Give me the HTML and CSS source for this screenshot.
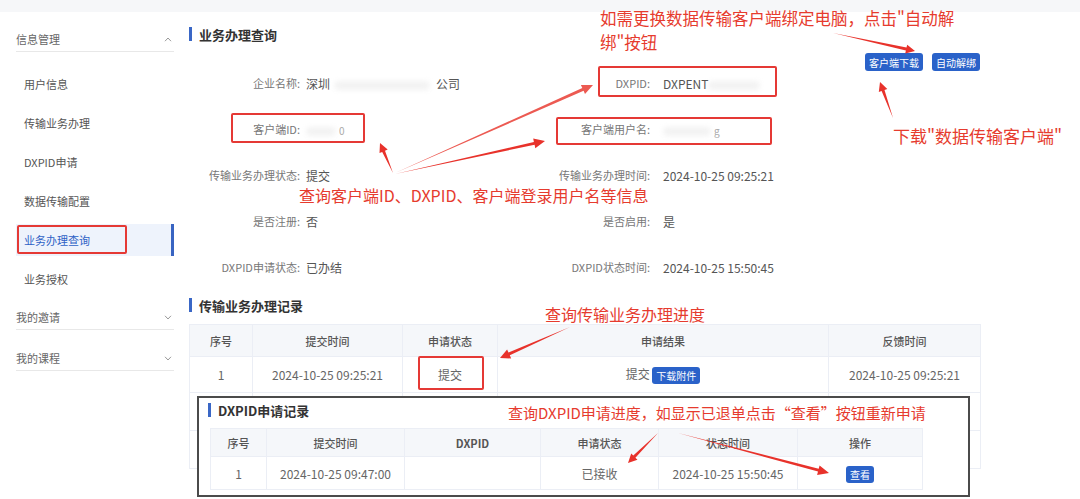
FILE: index.html
```html
<!DOCTYPE html>
<html lang="zh-CN">
<head>
  <meta charset="UTF-8" />
  <title>业务办理查询</title>
  <link rel="stylesheet" href="styles.css">
</head>
<body>
  <div class="page">
    <div class="topbar"></div>

    <div class="layout">
      <!-- Side menu -->
      <aside class="sidebar">
        <div class="menu-group open">
          <div class="menu-title">
            <span>信息管理</span>
            <svg class="chevron" viewBox="0 0 8 5"><polyline points="1,4.2 4,1 7,4.2" /></svg>
          </div>
          <ul class="menu-list">
            <li>用户信息</li>
            <li>传输业务办理</li>
            <li>DXPID申请</li>
            <li>数据传输配置</li>
            <li class="active">业务办理查询</li>
            <li>业务授权</li>
          </ul>
        </div>
        <div class="menu-group">
          <div class="menu-title">
            <span>我的邀请</span>
            <svg class="chevron" viewBox="0 0 8 5"><polyline points="1,0.8 4,4 7,0.8" /></svg>
          </div>
        </div>
        <div class="menu-group">
          <div class="menu-title">
            <span>我的课程</span>
            <svg class="chevron" viewBox="0 0 8 5"><polyline points="1,0.8 4,4 7,0.8" /></svg>
          </div>
        </div>
      </aside>

      <!-- Main content -->
      <main class="content">
        <section>
          <h3 class="section-title">业务办理查询</h3>
          <div class="info-wrap">
            <div class="info-grid">
              <div class="info-label">企业名称:</div>
              <div class="info-value">深圳<span class="mask mask-company"></span>公司</div>
              <div class="info-label">DXPID:</div>
              <div class="info-value right">DXPENT<span class="mask mask-dxpid"></span></div>

              <div class="info-label">客户端ID:</div>
              <div class="info-value"><span class="mask mask-id"></span><span class="faint">0</span></div>
              <div class="info-label">客户端用户名:</div>
              <div class="info-value right"><span class="mask mask-user"></span><span class="faint">g</span></div>

              <div class="info-label">传输业务办理状态:</div>
              <div class="info-value">提交</div>
              <div class="info-label">传输业务办理时间:</div>
              <div class="info-value right">2024-10-25 09:25:21</div>

              <div class="info-label">是否注册:</div>
              <div class="info-value">否</div>
              <div class="info-label">是否启用:</div>
              <div class="info-value right">是</div>

              <div class="info-label">DXPID申请状态:</div>
              <div class="info-value">已办结</div>
              <div class="info-label">DXPID状态时间:</div>
              <div class="info-value right">2024-10-25 15:50:45</div>
            </div>
            <div class="actions">
              <button class="btn">客户端下载</button>
              <button class="btn">自动解绑</button>
            </div>
          </div>
        </section>

        <section class="records">
          <h3 class="section-title">传输业务办理记录</h3>
          <table class="data-table transfer-table">
            <thead>
              <tr>
                <th>序号</th>
                <th>提交时间</th>
                <th>申请状态</th>
                <th>申请结果</th>
                <th>反馈时间</th>
              </tr>
            </thead>
            <tbody>
              <tr>
                <td>1</td>
                <td>2024-10-25 09:25:21</td>
                <td>提交</td>
                <td>提交 <button class="btn btn-sm">下载附件</button></td>
                <td>2024-10-25 09:25:21</td>
              </tr>
              <tr class="blank"><td></td><td></td><td></td><td></td><td></td></tr>
              <tr class="blank"><td></td><td></td><td></td><td></td><td></td></tr>
            </tbody>
          </table>
        </section>
      </main>
    </div>

    <!-- pasted screenshot of the DXPID record list -->
    <div class="record-shot">
      <h3 class="section-title">DXPID申请记录</h3>
      <table class="data-table dxpid-table">
        <thead>
          <tr>
            <th>序号</th>
            <th>提交时间</th>
            <th>DXPID</th>
            <th>申请状态</th>
            <th>状态时间</th>
            <th>操作</th>
          </tr>
        </thead>
        <tbody>
          <tr>
            <td>1</td>
            <td>2024-10-25 09:47:00</td>
            <td></td>
            <td>已接收</td>
            <td>2024-10-25 15:50:45</td>
            <td><button class="btn btn-sm">查看</button></td>
          </tr>
        </tbody>
      </table>
    </div>

    <!-- annotations -->
    <div class="mark mark-menu"></div>
    <div class="mark mark-client-id"></div>
    <div class="mark mark-dxpid"></div>
    <div class="mark mark-username"></div>
    <div class="mark mark-status"></div>

    <p class="note note-unbind">如需更换数据传输客户端绑定电脑，点击"自动解<br>绑"按钮</p>
    <p class="note note-download">下载"数据传输客户端"</p>
    <p class="note note-info">查询客户端ID、DXPID、客户端登录用户名等信息</p>
    <p class="note note-progress">查询传输业务办理进度</p>
    <p class="note note-dxpid">查询DXPID申请进度，如显示已退单点击“查看”按钮重新申请</p>

    <svg class="arrows" viewBox="0 0 1080 499">
      <polygon points="833,33 906.5,47.6 907.2,44.7 915,51 905.2,53.5 905.9,50.5" />
      <polygon points="893,118 884.5,90 887.3,88.9 880,82 878.8,92 881.6,91" />
      <polygon points="393,173 385,150.7 387.7,149.5 380,143 379.5,153.1 382.2,151.9" />
      <polygon class="thin" points="395,173 582.3,88.1 580.9,84.9 593,85 585,94 583.6,90.8" />
      <polygon points="395,174 533.9,141.9 533.2,138.5 545,141 535.3,148.3 534.6,144.8" />
      <polygon points="570,327 508.5,352.6 507.1,349.4 500,358 511.2,358.5 509.8,355.3" />
      <polygon points="658,433 633.3,455.6 631.2,453.5 628,463 637.5,459.8 635.4,457.7" />
      <polygon points="678,433 818.7,468.7 819.6,465.4 829,473 817.1,475 818,471.6" />
    </svg>
  </div>
</body>
</html>
```

FILE: styles.css
```css
/* Base */
* {
  margin: 0;
  padding: 0;
  box-sizing: border-box;
}

body {
  font-family: "Noto Sans CJK SC", "Noto Sans", sans-serif;
  font-size: 12px;
  color: #333;
  background: #fff;
}

.page {
  position: relative;
  width: 1080px;
  height: 499px;
  overflow: hidden;
}

.topbar {
  height: 12px;
  background: #f6f7f9;
}

.layout {
  display: flex;
}

/* Sidebar */
.sidebar {
  width: 174px;
  flex-shrink: 0;
  padding: 15px 0 0 16px;
}

.menu-group {
  margin-bottom: 16px;
}

.menu-group.open {
  margin-bottom: 0;
}

.menu-title {
  display: flex;
  align-items: center;
  justify-content: space-between;
  height: 25px;
  padding-right: 2px;
  border-bottom: 1px solid #e8e8e8;
  font-size: 11px;
  color: #666;
}

.chevron {
  width: 8px;
  height: 5px;
  fill: none;
  stroke: #999;
  stroke-width: 1;
}

.menu-list {
  list-style: none;
  margin: 16px 0 10px;
}

.menu-list li {
  height: 32px;
  line-height: 32px;
  margin-bottom: 7px;
  padding-left: 8px;
  font-size: 11px;
  color: #555;
}

.menu-list li:last-child {
  margin-bottom: 0;
}

.menu-list li.active {
  background: #eef3fc;
  color: #2f62c6;
  border-right: 3px solid #3864c2;
}

/* Content */
.content {
  width: 791px;
  margin-left: 15px;
  padding-top: 12px;
}

.section-title {
  display: flex;
  align-items: center;
  gap: 7px;
  height: 20px;
  font-size: 13px;
  font-weight: 700;
  color: #333;
}

.section-title::before {
  content: "";
  width: 3px;
  height: 14px;
  background: #3a67c6;
}

.info-wrap {
  display: flex;
  margin-top: 16px;
}

.info-grid {
  flex: 1;
  display: grid;
  grid-template-columns: 111px 210px 140px 1fr;
  grid-auto-rows: 46px;
  align-items: center;
}

.info-label {
  text-align: right;
  font-size: 11px;
  color: #777;
}

.info-value {
  padding-left: 6px;
  color: #555;
  white-space: nowrap;
}

.info-value.right {
  padding-left: 13px;
}

.mask {
  display: inline-block;
  height: 9px;
  vertical-align: middle;
  background: #dcdcdc;
  border-radius: 5px;
  filter: blur(2.5px);
  opacity: 0.35;
}

.mask-company { width: 96px; margin: 0 6px 0 4px; }
.mask-dxpid { width: 52px; }
.mask-id { width: 30px; margin-right: 3px; }
.mask-user { width: 48px; margin-right: 3px; }

.faint {
  color: #aaa;
  font-size: 10px;
}

.actions {
  display: flex;
  gap: 9px;
  align-self: flex-start;
  margin-top: -7px;
}

.btn {
  height: 18px;
  padding: 0 4px;
  border: 0;
  border-radius: 3px;
  background: #2a62c9;
  color: #fff;
  font-family: inherit;
  font-size: 10px;
}

.btn-sm {
  height: 17px;
  padding: 0 4px;
  vertical-align: middle;
}

/* Tables */
.records {
  margin-top: 5px;
}

.data-table {
  border-collapse: collapse;
  table-layout: fixed;
  text-align: center;
  color: #666;
}

.data-table th {
  height: 32px;
  background: #f5f7fa;
  border: 1px solid #ebeef5;
  font-size: 11px;
  font-weight: 500;
  color: #555;
}

.data-table td {
  height: 36px;
  border: 1px solid #ebeef5;
}

.transfer-table {
  width: 791px;
  margin-top: 9px;
}

.transfer-table th:nth-child(1) { width: 63px; }
.transfer-table th:nth-child(2) { width: 150px; }
.transfer-table th:nth-child(3) { width: 95px; }
.transfer-table th:nth-child(4) { width: 331px; }
.transfer-table th:nth-child(5) { width: 152px; }

.transfer-table tr.blank td {
  height: 38px;
}

.record-shot {
  position: absolute;
  left: 197px;
  top: 396px;
  width: 773px;
  height: 101px;
  padding: 2px 0 0 9px;
  border: 2px solid #4b4b4b;
  background: #fff;
}

.dxpid-table {
  width: 712px;
  margin: 8px 0 0 2px;
}

.dxpid-table th { height: 28px; }
.dxpid-table td { height: 33px; }

.dxpid-table th:nth-child(1) { width: 56px; }
.dxpid-table th:nth-child(2) { width: 138px; }
.dxpid-table th:nth-child(3) { width: 136px; font-weight: 700; }
.dxpid-table th:nth-child(4) { width: 118px; }
.dxpid-table th:nth-child(5) { width: 139px; }
.dxpid-table th:nth-child(6) { width: 125px; }

/* Annotations */
.mark {
  position: absolute;
  border: 2px solid #e53935;
  border-radius: 2px;
}

.mark-menu { left: 17px; top: 225px; width: 110px; height: 29px; }
.mark-client-id { left: 231px; top: 113px; width: 134px; height: 30px; }
.mark-dxpid { left: 598px; top: 66px; width: 179px; height: 31px; }
.mark-username { left: 556px; top: 117px; width: 216px; height: 28px; }
.mark-status { left: 418px; top: 356px; width: 66px; height: 34px; }

.note {
  position: absolute;
  font-size: 16px;
  line-height: 24px;
  color: #e63b2e;
  white-space: nowrap;
}

.note-unbind { left: 600px; top: 6px; font-size: 16.5px; }
.note-download { left: 893px; top: 124px; font-size: 17px; }
.note-info { left: 299px; top: 183px; }
.note-progress { left: 545px; top: 302px; }
.note-dxpid { left: 508px; top: 401px; font-size: 15px; }

.arrows {
  position: absolute;
  left: 0;
  top: 0;
  width: 1080px;
  height: 499px;
  pointer-events: none;
}

.arrows polygon {
  fill: #e8322b;
}

.arrows polygon.thin {
  fill: #ec5a52;
}
```
